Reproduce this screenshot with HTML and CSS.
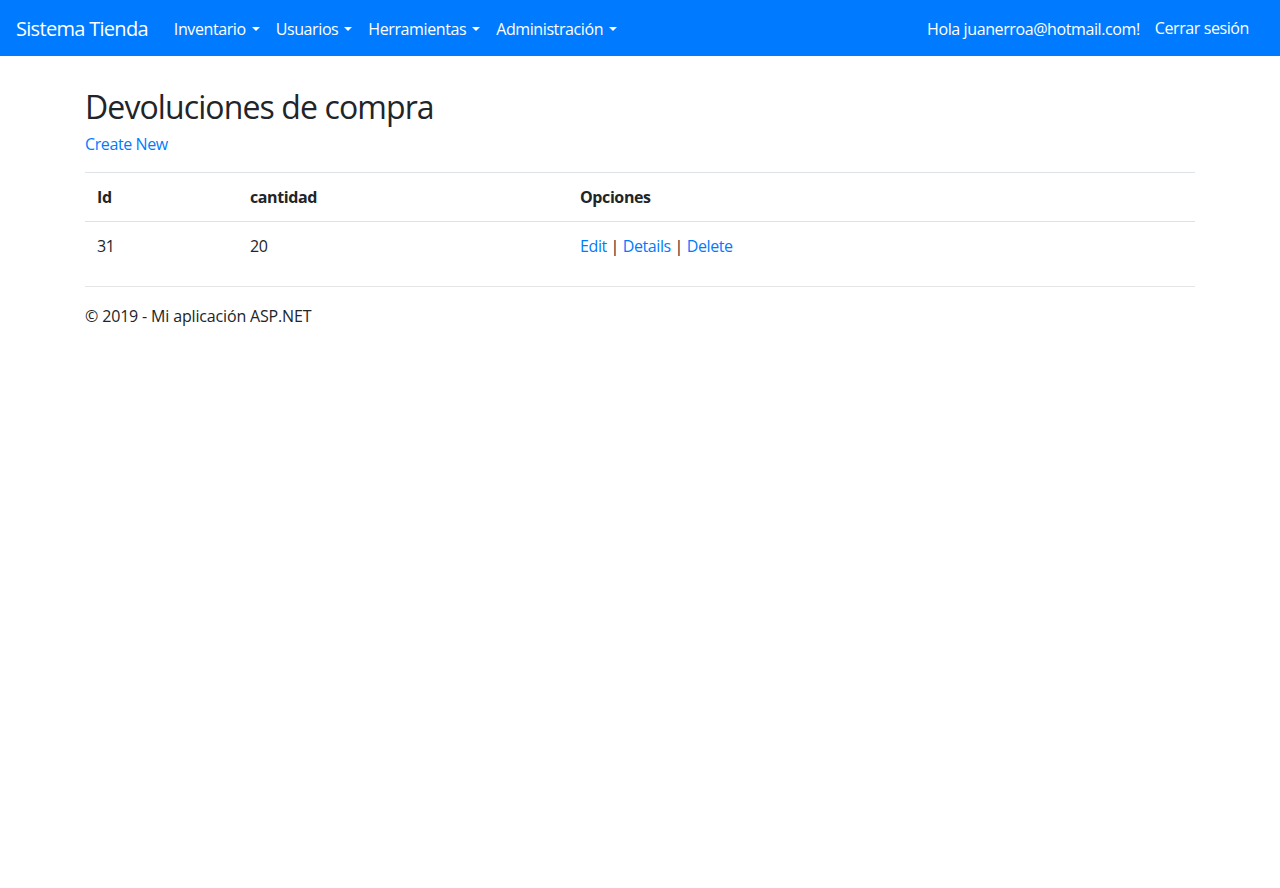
FILE: index.html
```html
<!DOCTYPE html>
<html lang="es">
<head>
<meta charset="utf-8">
<title>Devoluciones de compra - Sistema Tienda</title>
<link rel="stylesheet" href="styles.css">
</head>
<body>
<header class="header">
  <nav class="navbar">
    <a class="brand" href="#">Sistema Tienda</a>
    <ul class="nav-left">
      <li><a class="nav-link dropdown" href="#">Inventario</a></li>
      <li><a class="nav-link dropdown" href="#">Usuarios</a></li>
      <li><a class="nav-link dropdown" href="#">Herramientas</a></li>
      <li><a class="nav-link dropdown" href="#">Administración</a></li>
    </ul>
    <ul class="nav-right">
      <li><a class="nav-link" href="#">Hola juanerroa@hotmail.com!</a></li>
      <li><button class="btn-link" type="button">Cerrar sesión</button></li>
    </ul>
  </nav>
</header>
<div class="container">
  <main class="main">
    <h2 class="title">Devoluciones de compra</h2>
    <p class="create"><a href="#">Create New</a></p>
    <table class="table">
      <thead>
        <tr>
          <th class="c-id">Id</th>
          <th class="c-cant">cantidad</th>
          <th class="c-opt">Opciones</th>
        </tr>
      </thead>
      <tbody>
        <tr>
          <td>31</td>
          <td>20</td>
          <td><a href="#">Edit</a> | <a href="#">Details</a> | <a href="#">Delete</a></td>
        </tr>
      </tbody>
    </table>
  </main>
</div>
<footer class="footer">
  <div class="container">
    <div class="footer-inner">© 2019 - Mi aplicación ASP.NET</div>
  </div>
</footer>
</body>
</html>
```
FILE: styles.css
```css
* { box-sizing: border-box; }
html, body { margin: 0; padding: 0; }
body {
  font-family: "Segoe UI", "Open Sans", "Liberation Sans", sans-serif;
  font-size: 16px;
  line-height: 1.5;
  letter-spacing: -0.025em;
  color: #212529;
  background: #fff;
}
a { color: #007bff; text-decoration: none; }

.header { margin-bottom: 16px; }
.navbar {
  display: flex;
  align-items: center;
  height: 56px;
  padding: 9px 16px 7px;
  background: #007bff;
}
.brand {
  color: #fff;
  font-size: 20px;
  line-height: 30px;
  margin-right: 18px;
  letter-spacing: -0.035em;
  white-space: nowrap;
}
.nav-left, .nav-right {
  display: flex;
  list-style: none;
  margin: 0;
  padding: 0;
}
.nav-left { flex: 1; }
.nav-link {
  display: block;
  color: #fff;
  padding: 8px;
  white-space: nowrap;
}
.dropdown::after {
  content: "";
  display: inline-block;
  margin-left: 6px;
  vertical-align: 0.255em;
  border-top: 0.3em solid;
  border-right: 0.3em solid transparent;
  border-left: 0.3em solid transparent;
}
.btn-link {
  font: inherit;
  letter-spacing: inherit;
  color: #fff;
  background: none;
  border: 1px solid transparent;
  padding: 6px 14px 6px 6px;
  line-height: 1.5;
  cursor: pointer;
}

.container {
  max-width: 1140px;
  margin: 0 auto;
  padding: 0 15px;
}
.main { padding-top: 16px; padding-bottom: 16px; }
.title {
  margin: 0 0 6px;
  font-size: 32px;
  font-weight: 400;
  line-height: 1.2;
  letter-spacing: -0.028em;
}
.create { margin: 0 0 16px; }

.table {
  width: 100%;
  border-collapse: collapse;
  margin-bottom: 0;
}
.table th, .table td {
  padding: 12px;
  text-align: left;
  vertical-align: top;
  border-top: 1px solid #dee2e6;
}
.table thead th {
  font-weight: 700;
  border-bottom: 1px solid #dee2e6;
}
.c-id { width: 153px; }
.c-cant { width: 330px; }

.footer-inner {
  border-top: 1px solid #e5e5e5;
  line-height: 58px;
  letter-spacing: -0.01em;
  white-space: nowrap;
}
```
